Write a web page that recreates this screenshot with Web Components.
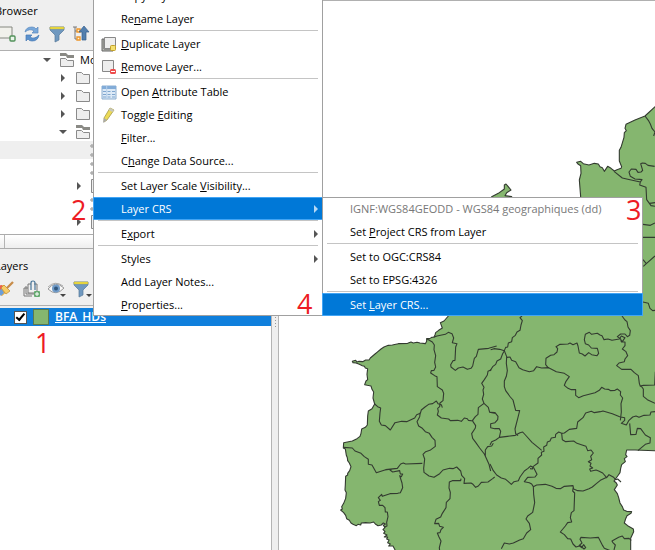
<!DOCTYPE html>
<html lang="en">
<head>
<meta charset="utf-8">
<title>Layer CRS menu</title>
<style>
html,body{height:100%}
body{margin:0;overflow:hidden;font:11px/16px "Open Sans","Noto Sans",sans-serif;color:#000;background:#fff}
</style>
</head>
<body>
<gis-window></gis-window>

<template id="t-window">
<style>
:host{display:flex;position:relative;height:100vh;min-height:0;overflow:hidden;background:#fff}
.docks{flex:none;width:276px;margin-left:-5px;display:flex;flex-direction:column;background:#efefef}
.split{flex:none;width:8px;box-sizing:border-box;background:#efefef;border:solid #b4b4b4;border-width:0 1px;display:flex;flex-direction:column;align-items:center;gap:2px;padding-top:317px}
.split i{width:1px;height:1px;background:#999}
map-canvas{flex:1;min-width:0}
.foot{flex:none;height:13px;margin-bottom:6px;border:solid #acacac;border-width:1px 0;background:linear-gradient(#fff,#eee);padding-left:9px}
.foot i{display:block;width:1px;height:100%;background:#b4b4b4}
browser-tree{flex:none;height:183px}
layer-list{flex:1;min-height:0}
context-menu{position:absolute}
.main{left:93px;top:-16px;width:230px}
.sub{left:322px;top:197px;width:321px}
step-mark{position:absolute}
.s1{left:35px;top:327px}.s2{left:71px;top:194px}.s3{left:626px;top:194px}.s4{left:297px;top:288px}
</style>
<div class="docks">
<dock-header label="Browser">
<button aria-label="Add selected layers"><svg viewBox="0 0 20 20"><path d="M1 3h14v11H1z" fill="#f1f1ec" stroke="#858880"/><rect x="13" y="12" width="5" height="5" rx="1" fill="#eaf5ea" stroke="#51915a" stroke-width="1.4"/></svg></button>
<button aria-label="Refresh"><svg viewBox="0 0 20 20"><path d="M3 8Q4 3 10 3q3 0 4 2l2-2v6h-6l2-2q-4-3-9 1z" fill="#78a8da" stroke="#5a88bd" stroke-width=".7"/><path d="M17 11q-1 6-7 6-3 0-4-2l-2 2v-6h6l-2 2q4 3 9-2z" fill="#5b91cd" stroke="#467ab4" stroke-width=".7"/></svg></button>
<button aria-label="Filter browser"><svg viewBox="0 0 20 20"><path d="M3 3h14v3l-5 5v5l-4 2v-7L3 6z" fill="#6f98bf" stroke="#56789a" stroke-width=".7"/><path d="M3 3h14v2H3z" fill="#f6e43c" stroke="#b3a642" stroke-width=".5"/></svg></button>
<button aria-label="Collapse all"><svg viewBox="0 0 20 20"><path d="M1 3h4M3 3v12h3M3 7h3" fill="none" stroke="#777"/><path d="M5 5h3v3H5zM5 13h3v3H5z" fill="#fff3d6" stroke="#ee972b" stroke-width="1.4"/><path d="M12 2l5 6h-3v8h-4V8H7z" fill="#527fae" stroke="#355f8e" stroke-width=".7"/></svg></button>
</dock-header>
<browser-tree></browser-tree>
<div class="foot"><i></i></div>
<dock-header label="Layers">
<button aria-label="Layer styling"><svg viewBox="0 0 20 20"><path d="M0 7l7-1 4 6-6 5-5-3z" fill="#f0b43c"/><path d="M0 7l5-1 1 3-4 3z" fill="#ec5d50"/><path d="M0 12l5-2 2 4-3 3z" fill="#6c9ed8"/><path d="M7 6l6 6-4 3-5-6z" fill="#f7cd67" stroke="#ba8933" stroke-width=".7"/><path d="M10 9l6-6" stroke="#c78c49" stroke-width="2.3"/></svg></button>
<button aria-label="Add group"><svg viewBox="0 0 20 20"><path d="M6 9H2v8h8M4 7v8h8M9 5H6v9h9V5h-3" fill="none" stroke="#777"/><path d="M9 11V4q0-2 2-2t2 2v7" fill="none" stroke="#487598" stroke-width="1.200"/><rect x="12" y="12" width="6" height="6" rx="1" fill="#66aa71"/><path d="M13 15h4M15 13v4" stroke="#fff"/></svg></button>
<button aria-label="Manage map themes"><svg viewBox="0 0 20 20"><path d="M1 10Q8 1 17 9q-8 9-16 1z" fill="#f8f8f8" stroke="#999"/><path d="M1 8Q8 1 16 7" fill="none" stroke="#999" stroke-width=".8"/><circle cx="9" cy="9.500" r="4" fill="#709bc8"/><circle cx="9" cy="9.500" r="2" fill="#31577d"/><path d="M13 15h6l-3 3z" fill="#444"/></svg></button>
<button aria-label="Filter legend"><svg viewBox="0 0 20 20"><path d="M2 3h14v3l-5 5v5l-4 2v-7L2 6z" fill="#6f98bf" stroke="#56789a" stroke-width=".7"/><path d="M2 3h14v2H2z" fill="#f6e43c" stroke="#b3a642" stroke-width=".5"/><path d="M14 15h6l-3 3z" fill="#444"/></svg></button>
</dock-header>
<layer-list></layer-list>
</div>
<div class="split"><i></i><i></i><i></i><i></i></div>
<map-canvas></map-canvas>
<context-menu class="main">
<menu-item>Copy Layer</menu-item>
<menu-item>Re<u>n</u>ame Layer</menu-item>
<menu-rule></menu-rule>
<menu-item><svg slot="icon" viewBox="0 0 16 16"><path d="M1 3h2v10h9v2H1z" fill="#b9bbb4" stroke="#666"/><path d="M3.500 1.500h11v11h-11z" fill="#eee" stroke="#888"/><rect x="9.500" y="9.500" width="5" height="5" rx="1" fill="#f4e070" stroke="#c2a028"/></svg><u>D</u>uplicate Layer</menu-item>
<menu-item><svg slot="icon" viewBox="0 0 16 16"><path d="M1.500 1.500h11v11h-11z" fill="#eee" stroke="#888"/><rect x="9" y="10" width="6" height="5" rx="1.500" fill="#ee4d4d"/><path d="M10 12.500h4" stroke="#fff"/></svg><u>R</u>emove Layer...</menu-item>
<menu-rule></menu-rule>
<menu-item><svg slot="icon" viewBox="0 0 16 16"><path d="M1 2h14v13H1z" fill="#dce9f6" stroke="#8caed0"/><path d="M1 2h14v3H1z" fill="#82acd8"/><path d="M2 7.500h3M6.500 7.500h3M11 7.500h3M2 10.500h3M6.500 10.500h3M11 10.500h3M2 13h3M6.500 13h3M11 13h3" stroke="#7fa6cf"/><path d="M5.700 2v13" stroke="#b5cfea"/></svg>Open <u>A</u>ttribute Table</menu-item>
<menu-item><svg slot="icon" viewBox="0 0 16 16"><path d="M9 1l4 2-7 10-3 2 0-4z" fill="#eddb57" stroke="#a59a48" stroke-width=".8"/><path d="M9 1l4 2-1.500 2-4-2z" fill="#c7c7bd"/><path d="M3 11l3 2-4 3z" fill="#aaa"/></svg>Toggle <u>E</u>diting</menu-item>
<menu-item><u>F</u>ilter...</menu-item>
<menu-item>C<u>h</u>ange Data Source...</menu-item>
<menu-rule></menu-rule>
<menu-item>Set Layer Scale <u>V</u>isibility...</menu-item>
<menu-item active submenu>Layer CRS</menu-item>
<menu-rule></menu-rule>
<menu-item submenu>E<u>x</u>port</menu-item>
<menu-rule></menu-rule>
<menu-item submenu>Styles</menu-item>
<menu-item>Add Layer Notes...</menu-item>
<menu-item><u>P</u>roperties...</menu-item>
</context-menu>
<context-menu class="sub">
<menu-item disabled>IGNF:WGS84GEODD - WGS84 geographiques (dd)</menu-item>
<menu-item>Set <u>P</u>roject CRS from Layer</menu-item>
<menu-rule></menu-rule>
<menu-item>Set to OGC:CRS84</menu-item>
<menu-item>Set to EPSG:4326</menu-item>
<menu-rule></menu-rule>
<menu-item active>Set <u>L</u>ayer CRS...</menu-item>
</context-menu>
<step-mark class="s1">1</step-mark><step-mark class="s2">2</step-mark><step-mark class="s3">3</step-mark><step-mark class="s4">4</step-mark>
</template>

<template id="t-header">
<style>
:host{display:block;flex:none;border-bottom:1px solid #b0b0b0}
h2{margin:0;padding:2px 0 2px 0;font:inherit;line-height:17px}
div{display:flex;gap:5px;padding:3px 0 6px 2px}
::slotted(button){all:unset;width:20px;height:20px}
</style><h2></h2><div role="toolbar"><slot></slot></div>
</template>

<template id="t-tree">
<style>
:host{display:block;overflow:hidden;background:#fff}
ul{margin:0;padding:0;list-style:none}
li{display:flex;align-items:center;height:18px;gap:8px;box-sizing:border-box}
svg{flex:none}
.a{padding-left:48px}.b{padding-left:64px}.c{padding-left:80px}.d{padding-left:95px}
.sel{background:#efefef}
span{margin-left:-3px}
</style><ul></ul>
</template>

<template id="t-layers">
<style>
:host{display:block;background:#fff}
.row{display:flex;align-items:center;height:18px;background:#0f7fdc;padding-left:19px;color:#fff}
.pad{padding-top:2px;background:#efefef}
input{appearance:none;width:13px;height:13px;margin:0;background:#fff;border:1px solid #555;box-sizing:border-box;flex:none;display:grid;place-items:center}
input:checked::before{content:"";width:3px;height:7px;border:solid #000;border-width:0 2px 2px 0;transform:rotate(40deg) translate(-1px,-1px)}
i{flex:none;width:14px;height:14px;margin:0 6px;background:#85b66f;border:1px solid #5b794f}
label{font-size:12px;font-weight:600;text-decoration:underline}
</style><div class="pad"><div class="row"><input type="checkbox" id="v" checked><i></i><label for="v">BFA_HDs</label></div></div>
</template>

<template id="t-menu">
<style>
:host{display:block;background:#fff;box-shadow:inset 0 0 0 1px #a0a0a0}
</style><div role="menu"><slot></slot></div>
</template>

<template id="t-item">
<style>
:host{display:block}
button{all:unset;box-sizing:border-box;display:flex;align-items:center;width:100%;height:23px;padding:0 4px 0 7px;border:1px solid transparent;white-space:nowrap}
.ic{flex:none;width:20px;height:16px}
::slotted(svg){display:block;width:16px;height:16px}
.tx{flex:1}
:host([active]) button{background:#0078d7;border-color:#42a5f5;color:#fff}
:host([disabled]) button{color:#787878}
.ar{display:none;fill:#555}
:host([submenu]) .ar{display:block}
:host([active]) .ar{fill:#b5d8f5}
</style><button role="menuitem"><span class="ic"><slot name="icon"></slot></span><span class="tx"><slot></slot></span><svg class="ar" width="4" height="8" viewBox="0 0 4 8"><path d="M0 0l4 4-4 4z"/></svg></button>
</template>

<template id="t-rule">
<style>:host{display:block;height:1px;margin:0 5px 1px;background:#c4c4c4}</style>
</template>

<template id="t-mark">
<style>:host{display:block;font-size:27px;line-height:32px;color:#ed1c24}</style><slot></slot>
</template>

<template id="t-map">
<style>
:host{display:block;background:#fff;overflow:hidden;border-top:1px solid #b0b0b0;box-sizing:border-box}
svg{display:block;width:100%;height:100%}
</style>
<svg viewBox="279 1 376 549" preserveAspectRatio="xMinYMin slice" role="img" aria-label="District boundaries">
<g fill="none" stroke="#333b30" stroke-width="3.300" stroke-linejoin="round">
<g transform="translate(335 310) scale(.33333)">
<path fill="#85b66f" d="M340 18L327 33 316 38 319 46 322 54 311 61 302 68 300 75 297 81 290 82 284 86 275 86 275 94 271 101 255 99 246 97 235 99 228 96 218 100 190 101 172 105 160 106 147 111 138 117 126 127 120 132 106 144 102 150 92 150 83 155 72 154 66 156 62 151 52 154 54 158 63 159 73 163 82 167 88 169 91 174 98 176 96 193 98 209 93 213 89 224 97 226 108 228 111 238 116 246 114 264 119 282 111 296 100 303 98 318 97 345 91 352 80 357 78 370 75 379 66 386 52 393 26 398 25 414 31 417 34 436 37 443 38 452 43 459 48 470 44 482 38 490 38 495 32 499 31 524 30 540 34 548 32 565 26 580 20 590 22 597 17 600 26 608 32 616 35 626 43 631 48 639 54 643 64 647 69 643 77 645 79 639 92 638 105 639 116 636 121 642 129 647 139 645 145 639 151 642 145 646 150 652 144 659 150 664 146 670 156 675 148 681 158 681 155 687 162 690 158 698 166 702 161 708 174 708 180 719 178 735 887 735 887 685 896 665 895 657 878 647 868 639 872 626 876 617 888 610 890 605 875 604 866 600 862 590 855 579 851 563 847 551 838 539 847 525 844 519 837 513 848 498 855 488 857 475 860 464 871 455 868 446 876 440 872 434 875 420 900 420 980 423 980-625 958-608 930-582 900-570 873-557 870-545 874-538 868-532 867-518 858-488 853-479 853-447 860-430 858-425 846-421 838-417 828-425 818-431 808-416 802-427 795-430 790-438 778-440 762-435 745-439 737-446 725-443 730-437 737-433 738-410 733-390 737-340 700-220 590-220 530-340 510-343 515-352 528-360 519-371 513-378 508-375 508-363 490-350 470-340 430-200Z"/>
<path d="M275 86l17 10 6 9-1 14 5 18-3 20 3 14-5 10-8 1-2 7 12 8 7 3 1 30 15 10 4 10-2 22-9 7-1 11-6 5 2 9-3 11 12 9 22 3 5 5 22-1 11 3 9-10 9 2 3 5 15 2M296 82l10-4 25-5 9-6 11 4 5 13-4 14 14 3-4 10-1 20-1 20-6 1-7 12 1 7 13 10 9-7 14-3 13 7 11-3 5-7 5-23 6-6 6-21 31-3 24-7M119 282l9 8 9 4-2 15-2 25 6 11 12 2 15 13 14-22 20-4 15 1 24-11 6-10 11-4 3-10 11-9 11-8 12-2 11-8 5 8 10 3 3 9M256 307l-2 13-8 15 5 13 11 7 9 10 12 5 8 12 9 9 1 18-16 12-13 4-8 8 5 14-3 28 1 12 15 11 15 4 17-11 10-11 20-5 10 1 11-5 12 12 3 13 9 10-2 14 21-1 6 4 8 9 8-4 9-11 20-1 14-10 6-5M26 412l26 2 8 9 18 7 10 10 12 8 0 15 11 2 13 23 28-9 35-4 10-13 8-3 7 3 50-2M150 480l22-3-7 3 8 6 21-4 2 10 7 0-4 8-5-3 7 22 2 14-7 15-8 2-23 1-23 8-2-6-10 10 6 8-6 4 3 11 10 0 7 7 1 13 6 0 2 14-4 17 1 11-9 4M378 506l-1 6-25 0-9 4-1 18 4 13-1 19-11 11-1 16-11 17-5 11-14 7-4 13 12-1 3 9 11 3-7 7-3 9-8 1 5 12 6 12-5 20 3 30M412 332l9-12 8-7 1-20 17-13 13 12 4 15 16 3M412 332l10 15-1 7-11 17 3 14 9 12 12 17 14 18 14 31 5 20M447 280l-5-13 4-14-2-13 3-8-7-12 8-11 9-14 2-11 10-5M451 439l0-19 7-10 12-2 5-8"/>
</g>
<g transform="translate(490 310) scale(.33333)">
<path d="M96 18l-6 5 7 9-4 13-3 16-9 5-5 10-9 7-2 12-10 4-2 12-6 1-4 10-14-4-17-2-10 3M43 122l-5 9-6 16-11 6-4 10-9 7-8 13M43 122l7 18-1 20 3 22-3 17-6 14 0 17 4 12 14 19 8 9 8 31 12 1-6 24-8 31 2 14 7 6M51 142l9-1 5 10 12 4 10 18 11 6 20 6 13-3 9-12 15 4 21-1 23 12 24 5 15 10-10 14-5 12 11 9 10 4 13 0 0 17 9 7 14-6 35-9 13-7 7-9 9 5 11 1 7 4 13-1 7-4 10 8-1 10 7 9-5 17 1 25-3 25M176 175l-9-11 1-19 14-9 10-2 9-8 2-10-5-6 12-7 24-1 6-3 9 5 12-5 3 9 4 21 9 3 8 6 11-10 9 6 16 3 5-7-4-15-18-1-8-9-10-4-3-12 3-16 12-6 7 6 17-3 8 5 6 2 6 12 12-2 12 4 22-4 6-9 11 5-8 12-4-5M396 18l9 12 6 5 3 16 7 11-2 14-7 4-7-8-13 0-10 8 10 7 2 9 11 0 0 11-8 10 11 8 5 12-8 10-2 8-16 4-7 8 15 11 28 0 10 10 12 9 3 23 3 9 9-3 34-1 2-40M452 226l8 11 0 22 12 10 23 11M215 370l8-1 15-11 22-3 3-19 16-13 8-14 17-5 9 4 18-3 8-2 28 8 22 9 15 3 0 8-10 9 15 5 8-14 11-10 10-3 9 4 15-6 18-1 3-9 12-1M419 340l3 34 16-1 4-18 10 1 14 19 15 8-1 16-14 4-18 15-4 4M215 370l2 19 10 6 24-2 10 7 13 4 14 5 5 13 10-2 7 9-8 10 3 10-10 6 8 5-3 8 8 6-9 3 3 7 16-4 8 3 12 6 12 14 7-9 14 8 6 7 6-2 10 9M215 370l-9-4-9 7-1 9-12 2-4 9-8 3-2 10-9 5 1 13-8 3 1 8-11 10 0 14-14 10-3 8-7-1M28 382l24-3 24-3 14-8 8-2 11 12 17 19 12 10 17 14M0 405l5-10 12-5 11-8M0 307l15 1 9 11-1 10-8 9-13 3 0 12 12 3 14 0 4 8-4 18M0 462l10 20 10 13 14 9 13 4 8 7 9 8 8-8 13-3 5-11 13-18 11-8 8-7 9 5 10 20-6 8-22 1-10 13 15 3 7 4 5 8M130 530l10-5 26-2 20 6 12 6 13 1 12-7 26-2 2 10 12 5 16 1 18-7 10-5 12-10 12-10 21-10M130 530l1 23 3 25-3 15-3 14-15 11-5 9 10 13 4 19-12 10-10 17-11 4-19 9-12 3-15-3-9 17M250 530l-2 13 6 6-2 53-8 6-3 15 4 13-12 2-7 10-15 18 12 8 10 12 9 1 7 15 9 9 13-4 11 10 5-4-6-9-6 9-8-6 9-8-6-11 3-6 28 2 24-2 13 25 5 8 18 7M372 720l4-15-8-8-2-4 20-11 11-4 6 8 14-1 7 6"/>
</g>
<g transform="translate(575 95) scale(.33333)">
<path d="M210 63l10 13 6 11 5 13 9 11-4 12M117 229l25 20 23 5 31 7 5-7-7-1-14-1-14-8-4-13 7-9 14 1 6 9 9-1 5-5-6-20 5-2 9 1 8 6 20 3M196 261l-2 9 19 7 2 37 13 18 12 2M224 325l16-2M204 388l22 3 14-7M204 427h36M204 494l10 12 26-23M214 506l-9 8M204 621l16 4 5 15 8 7 8-1"/>
</g>
</g>
</svg>
</template>

<script>
function define(name, tpl, setup) {
  customElements.define(name, class extends HTMLElement {
    constructor() {
      super();
      this.attachShadow({ mode: "open" }).append(document.getElementById(tpl).content.cloneNode(true));
    }
    connectedCallback() {
      if (setup && !this.ready) { this.ready = true; setup(this, this.shadowRoot); }
    }
  });
}
define("menu-rule", "t-rule");
define("menu-item", "t-item", (el, root) => {
  const b = root.querySelector("button");
  b.disabled = el.hasAttribute("disabled");
  if (el.hasAttribute("submenu")) b.setAttribute("aria-haspopup", "menu");
});
define("context-menu", "t-menu");
define("step-mark", "t-mark");
define("dock-header", "t-header", (el, root) => {
  root.querySelector("h2").textContent = el.getAttribute("label");
});
define("browser-tree", "t-tree", (el, root) => {
  const open = '<svg width="8" height="8"><path d="M0 2h8l-4 4z" fill="#555"/></svg>';
  const shut = '<svg width="8" height="8"><path d="M2 0l4 4-4 4z" fill="#555"/></svg>';
  const folder = '<svg width="16" height="14"><path d="M1.500 1.500h5l2 2h6v9h-13z" fill="#eee" stroke="#8a8a8a"/></svg>';
  const openFolder = '<svg width="16" height="16"><path d="M1 1h6l2 2h6v3H8L7 4H1z" fill="#8a8a85"/><path d="M1.500 6.500h5l2 2h6v6h-13z" fill="#eee" stroke="#8a8a8a"/></svg>';
  const sheet = '<svg width="14" height="15"><path d="M.5.5h12v13H.5z" fill="#eee" stroke="#8a8a8a"/></svg>';
  const points = '<svg width="14" height="16"><g fill="#fff" stroke="#888"><circle cx="2" cy="4" r="1.200"/><circle cx="2" cy="13" r="1.200"/></g></svg>';
  const rows = [["a", open + openFolder + "<span>Mo</span>"], ["b", shut + folder], ["b", shut + folder], ["b", shut + folder],
    ["b", open + openFolder], ["d sel", points], ["d", points], ["c", shut + sheet], ["d", points], ["c", shut + sheet]];
  root.querySelector("ul").innerHTML = rows.map(r => `<li class="${r[0]}">${r[1]}</li>`).join("");
});
define("layer-list", "t-layers");
define("map-canvas", "t-map");
define("gis-window", "t-window");
</script>
</body>
</html>
